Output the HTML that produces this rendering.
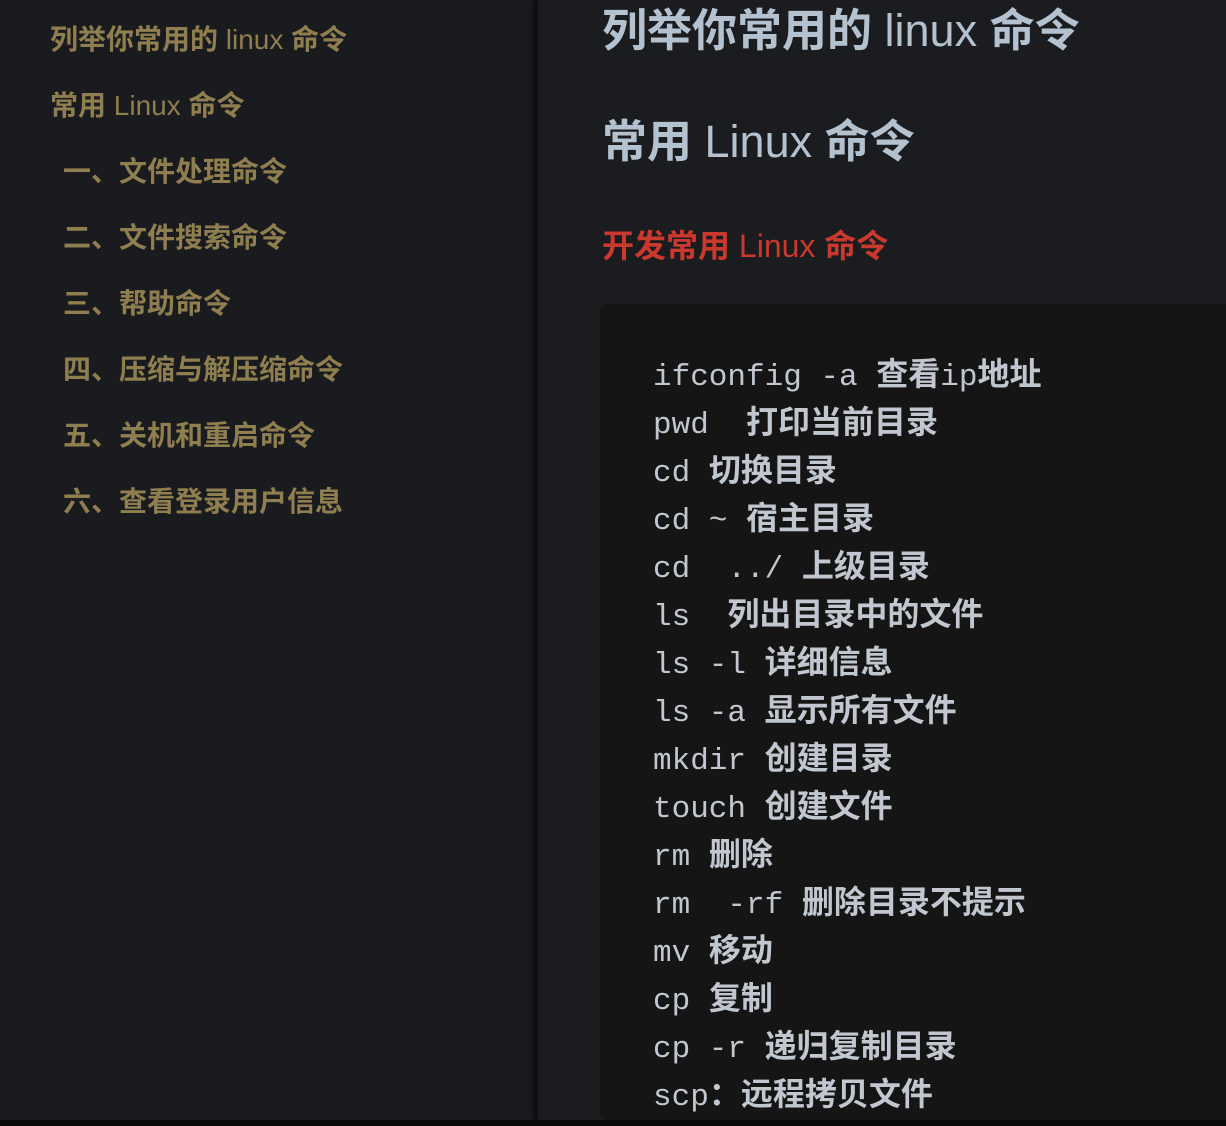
<!DOCTYPE html>
<html><head><meta charset="utf-8"><style>
html,body{margin:0;padding:0;width:1226px;height:1126px;overflow:hidden;background:#1d1e21;}
body{position:relative;font-family:"Liberation Sans","Noto Sans CJK SC",sans-serif;}
.side{position:absolute;left:0;top:0;width:533px;height:1120px;background:#1a1b1e;}
.border{position:absolute;left:533px;top:0;width:5px;height:1120px;background:#0e0f11;box-shadow:4px 0 12px rgba(0,0,0,.5);}
.main{position:absolute;left:538px;top:0;right:0;height:1120px;background:#1b1c1f;}
.bot{position:absolute;left:0;top:1120px;width:1226px;height:6px;background:#0a0a0a;}
.it{position:absolute;color:#8f7e4f;font-size:28px;font-weight:bold;white-space:nowrap;line-height:30px;}
.l{font-weight:normal;}
.h{position:absolute;left:602px;color:#b4c2d0;font-size:45px;font-weight:bold;white-space:nowrap;line-height:50px;}
.h3{position:absolute;left:602px;top:228px;color:#c9392d;font-size:32px;font-weight:bold;white-space:nowrap;line-height:36px;}
.code{position:absolute;left:600px;top:304px;width:640px;height:816px;background:#151515;border-radius:6px;}
.ln{position:absolute;left:653px;color:#c1c6cf;font-size:31px;white-space:pre;line-height:40px;font-family:"Liberation Mono","Noto Sans CJK SC",monospace;}
.ln b{font-family:"Liberation Sans","Noto Sans CJK SC",sans-serif;font-weight:bold;font-size:32px;}
</style></head><body>
<div class="side"></div><div class="border"></div><div class="main"></div><div class="bot"></div>
<div class="it" style="left:50px;top:25px">列举你常用的 <span class="l">linux</span> 命令</div>
<div class="it" style="left:50px;top:91px">常用 <span class="l">Linux</span> 命令</div>
<div class="it" style="left:63px;top:157px">一、文件处理命令</div>
<div class="it" style="left:63px;top:223px">二、文件搜索命令</div>
<div class="it" style="left:63px;top:289px">三、帮助命令</div>
<div class="it" style="left:63px;top:355px">四、压缩与解压缩命令</div>
<div class="it" style="left:63px;top:421px">五、关机和重启命令</div>
<div class="it" style="left:63px;top:487px">六、查看登录用户信息</div>
<div class="h" style="top:6px">列举你常用的 <span class="l">linux</span> 命令</div>
<div class="h" style="top:117px">常用 <span class="l">Linux</span> 命令</div>
<div class="h3">开发常用 <span class="l">Linux</span> 命令</div>
<div class="code"></div>
<div class="ln" style="top:354px">ifconfig -a <b>查看</b>ip<b>地址</b></div>
<div class="ln" style="top:402px">pwd  <b>打印当前目录</b></div>
<div class="ln" style="top:450px">cd <b>切换目录</b></div>
<div class="ln" style="top:498px">cd ~ <b>宿主目录</b></div>
<div class="ln" style="top:546px">cd  ../ <b>上级目录</b></div>
<div class="ln" style="top:594px">ls  <b>列出目录中的文件</b></div>
<div class="ln" style="top:642px">ls -l <b>详细信息</b></div>
<div class="ln" style="top:690px">ls -a <b>显示所有文件</b></div>
<div class="ln" style="top:738px">mkdir <b>创建目录</b></div>
<div class="ln" style="top:786px">touch <b>创建文件</b></div>
<div class="ln" style="top:834px">rm <b>删除</b></div>
<div class="ln" style="top:882px">rm  -rf <b>删除目录不提示</b></div>
<div class="ln" style="top:930px">mv <b>移动</b></div>
<div class="ln" style="top:978px">cp <b>复制</b></div>
<div class="ln" style="top:1026px">cp -r <b>递归复制目录</b></div>
<div class="ln" style="top:1074px">scp<b>：远程拷贝文件</b></div>
</body></html>
